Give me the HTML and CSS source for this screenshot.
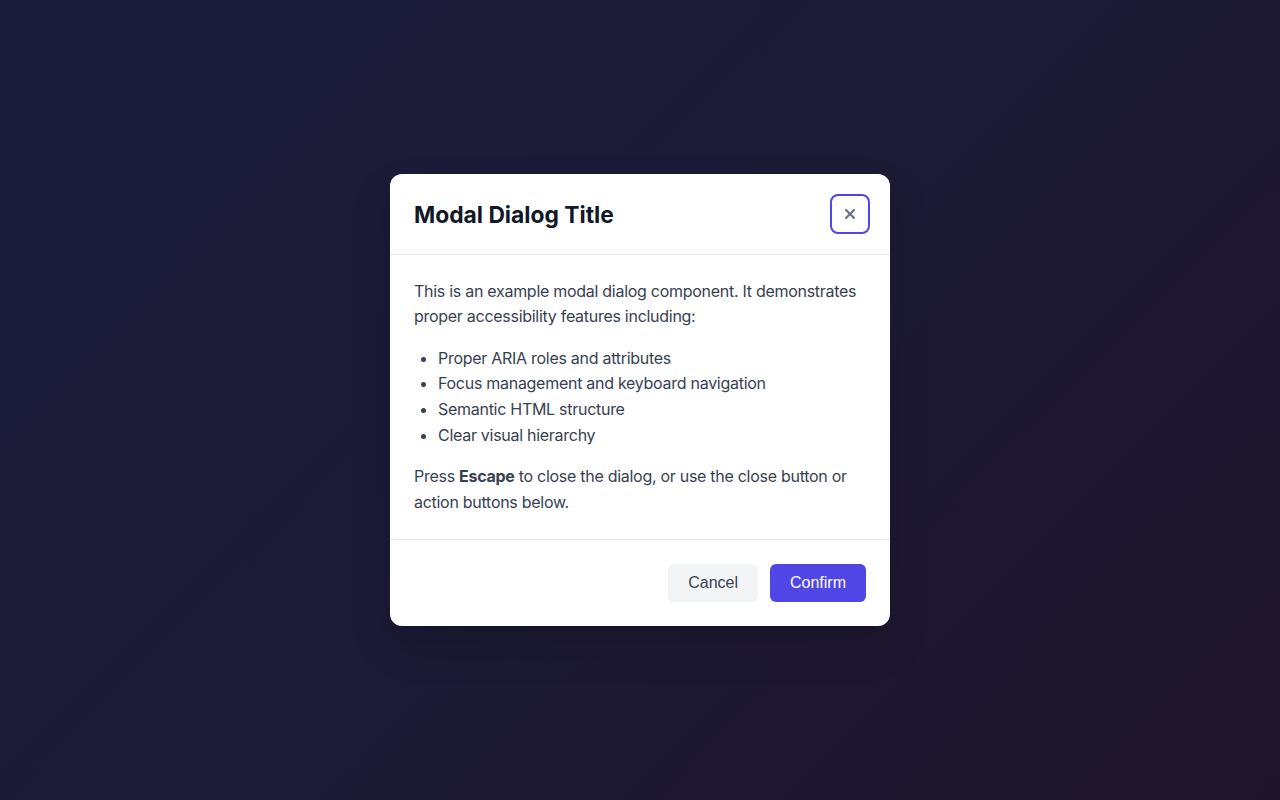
FILE: index.html
```html
<!DOCTYPE html>
<html lang="en">
<head>
<meta charset="utf-8">
<title>Modal Dialog</title>
<link rel="stylesheet" href="styles.css">
</head>
<body>
<div class="backdrop">
  <div class="modal" role="dialog" aria-modal="true" aria-labelledby="modal-title">
    <header class="modal-header">
      <h2 id="modal-title" class="modal-title">Modal Dialog Title</h2>
      <button class="close-btn" aria-label="Close dialog">
        <svg width="12" height="12" viewBox="0 0 12 12" aria-hidden="true"><path d="M2 2L10 10M10 2L2 10" stroke="#6b7280" stroke-width="2.2" stroke-linecap="round"/></svg>
      </button>
    </header>
    <div class="modal-body">
      <p>This is an example modal dialog component. It demonstrates proper accessibility features including:</p>
      <ul>
        <li>Proper ARIA roles and attributes</li>
        <li>Focus management and keyboard navigation</li>
        <li>Semantic HTML structure</li>
        <li>Clear visual hierarchy</li>
      </ul>
      <p>Press <strong>Escape</strong> to close the dialog, or use the close button or action buttons below.</p>
    </div>
    <footer class="modal-footer">
      <button class="btn btn-secondary">Cancel</button>
      <button class="btn btn-primary">Confirm</button>
    </footer>
  </div>
</div>
</body>
</html>
```
FILE: styles.css
```css
* { box-sizing: border-box; }
html, body { margin: 0; height: 100%; }
body {
  font-family: Inter, "Noto Sans", sans-serif;
  background: linear-gradient(135deg, #1a1c3b 0%, #1c1a35 50%, #1e1429 100%);
}
.backdrop {
  height: 100%;
  display: flex;
  align-items: center;
  justify-content: center;
}
.modal {
  width: 500px;
  background: #ffffff;
  border-radius: 12px;
  box-shadow: 0 20px 40px rgba(0,0,0,0.15);
}
.modal-header {
  display: flex;
  align-items: center;
  justify-content: space-between;
  padding: 20px 20px 20px 24px;
  border-bottom: 1px solid #e5e7eb;
}
.modal-title {
  margin: 0;
  font-size: 22.8px;
  font-weight: 700;
  color: #111827;
  line-height: 1.2;
  position: relative;
  top: 1px;
}
.close-btn {
  width: 40px;
  height: 40px;
  display: flex;
  align-items: center;
  justify-content: center;
  background: #fff;
  border: 2px solid #4f46e5;
  border-radius: 8px;
  padding: 0;
}
.modal-body {
  padding: 24px;
  color: #374151;
  font-size: 16px;
  line-height: 1.6;
  letter-spacing: -0.28px;
}
.modal-body p { margin: 0 0 16px; }
.modal-body p:last-child { margin-bottom: 0; }
.modal-body ul { margin: 0 0 16px; padding-left: 24px; }
.modal-body strong { font-weight: 700; }
.modal-footer {
  display: flex;
  justify-content: flex-end;
  gap: 12px;
  padding: 24px;
  border-top: 1px solid #e5e7eb;
}
.btn {
  font-family: "Liberation Sans", Arial, sans-serif;
  font-size: 16px;
  padding: 10px 20px;
  border: none;
  border-radius: 6px;
  line-height: 18px;
}
.btn-secondary { background: #f3f4f6; color: #374151; }
.btn-primary { background: #4f46e5; color: #ffffff; }
```
